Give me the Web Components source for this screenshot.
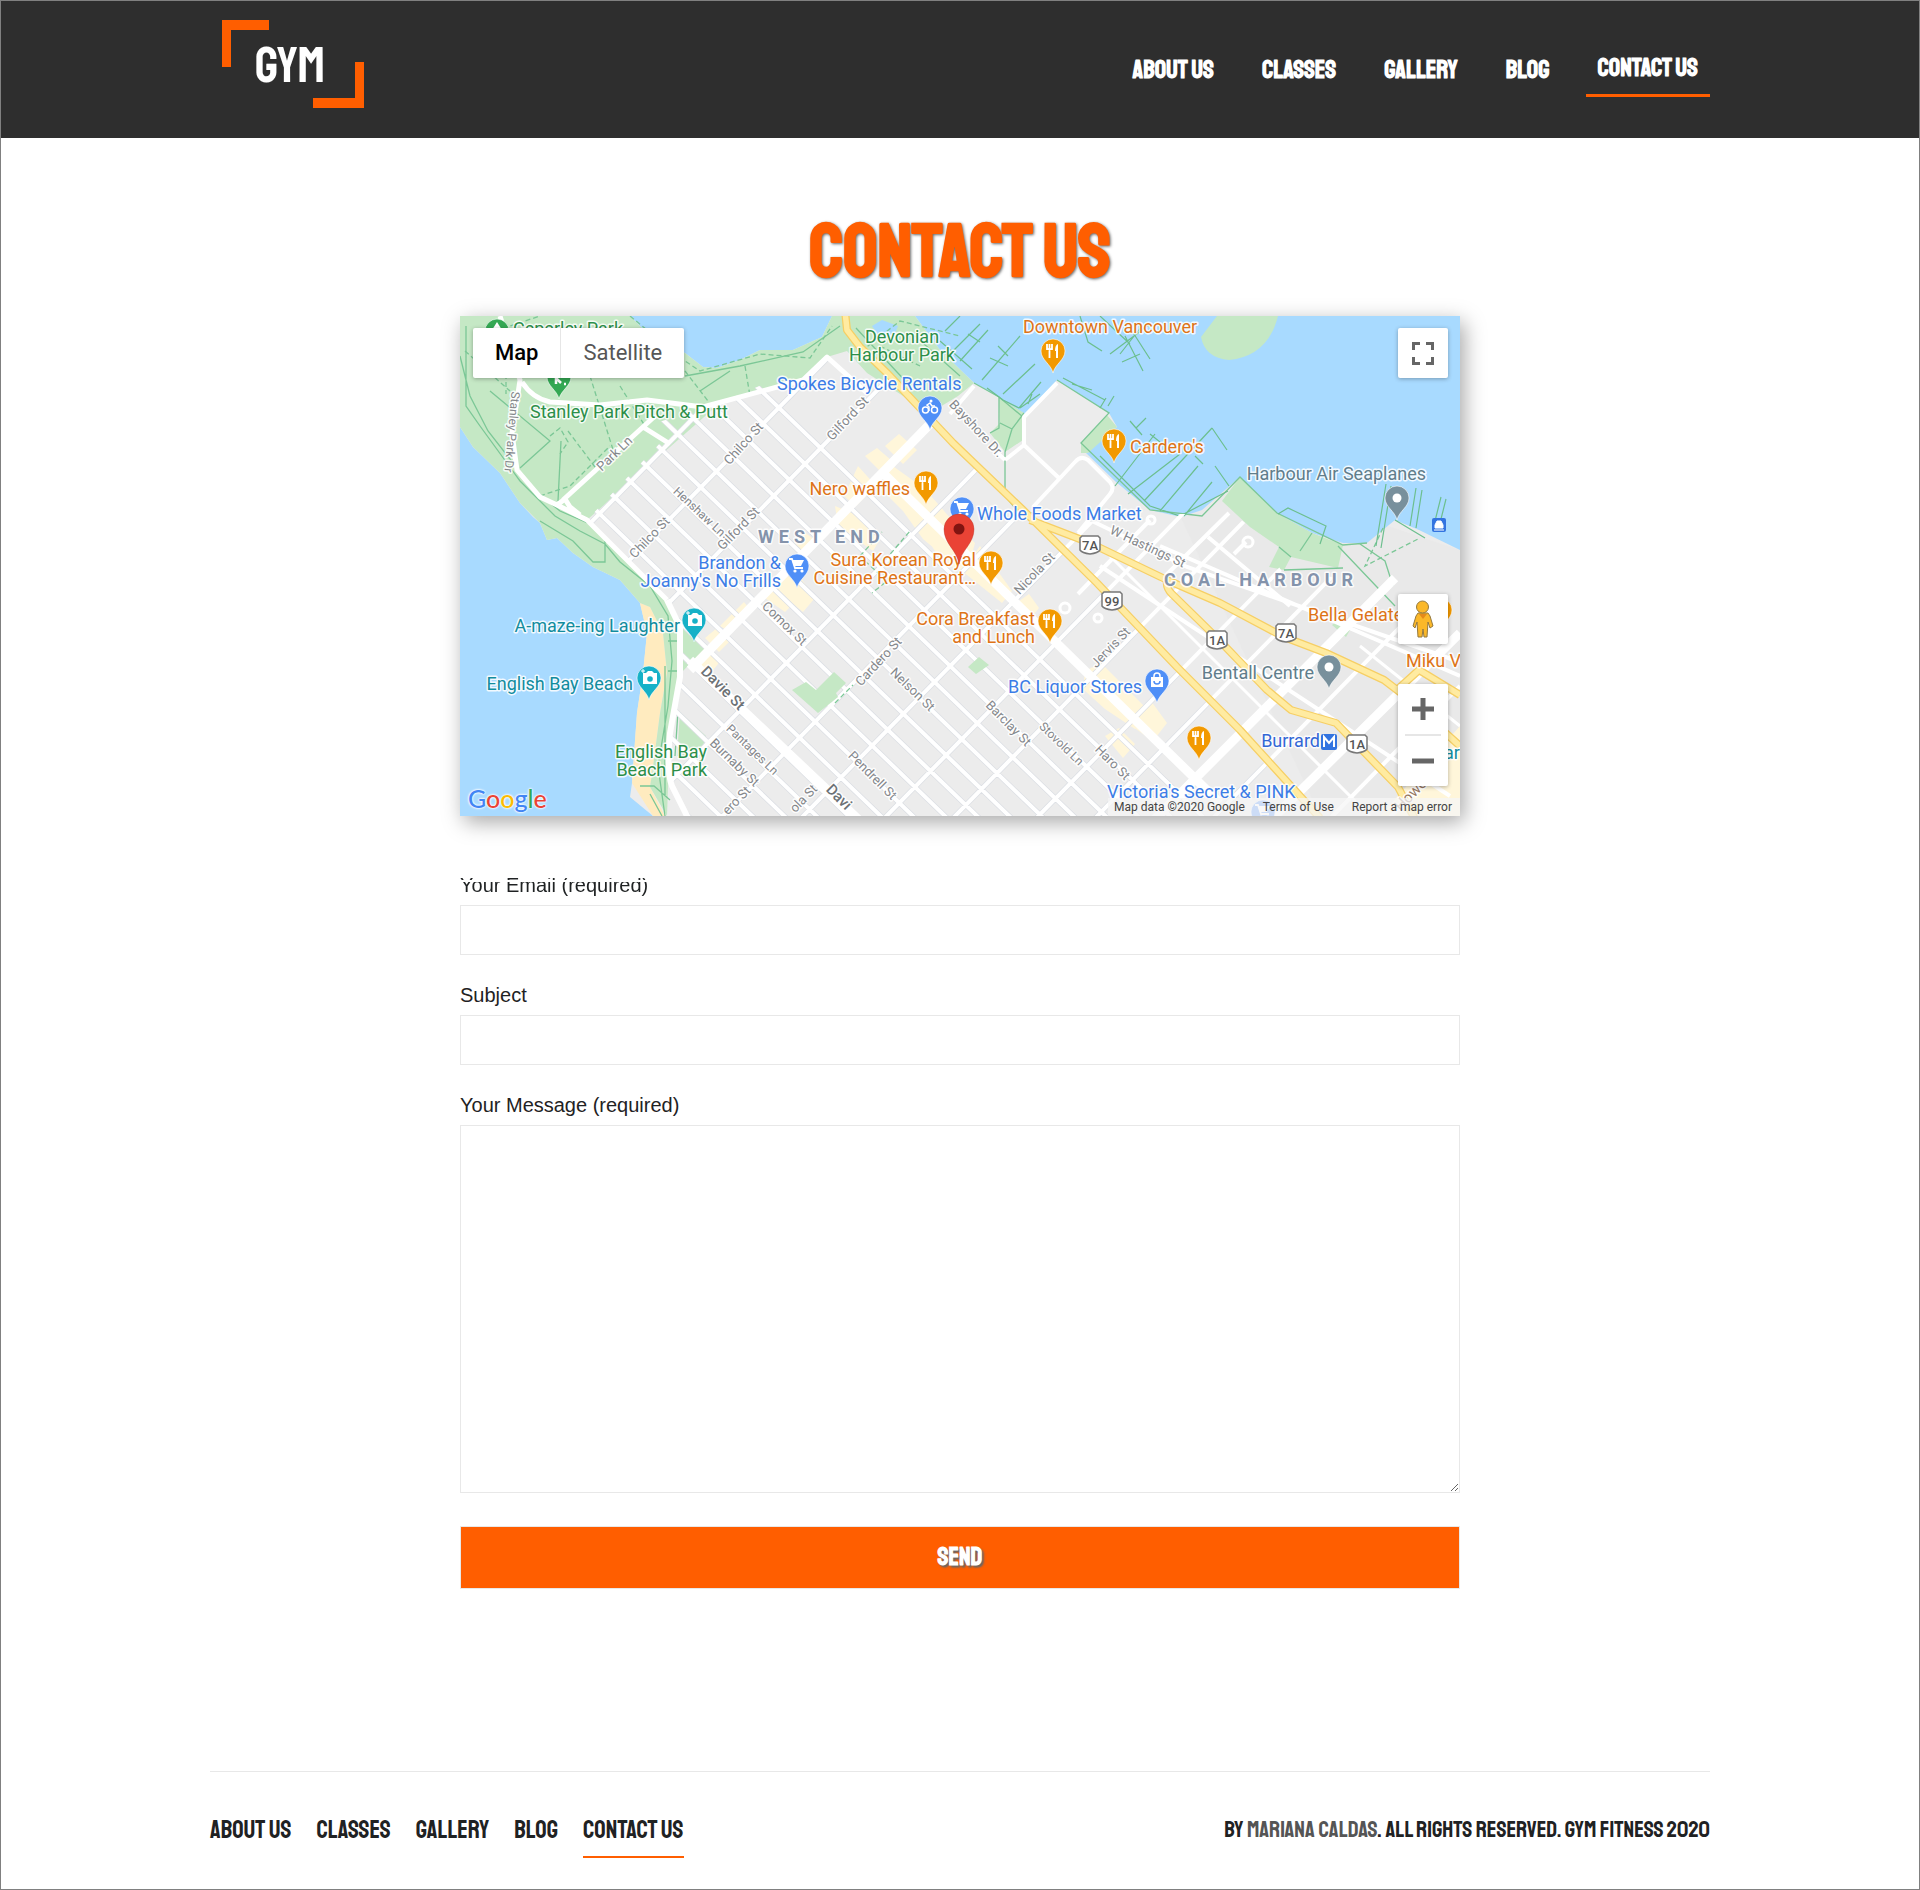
<!DOCTYPE html>
<html lang="en">
<head>
<meta charset="utf-8">
<title>Gym Fitness | Contact Us</title>
<style>
  *, *::before, *::after { box-sizing: border-box; }
  body {
    --brand: #ff5e00;
    --ink: #1f2223;
    --display: "Staatliches", "Bebas Neue", "Noto Sans ExtraCondensed", "Open Sans Condensed", "Roboto Condensed", "Liberation Sans Narrow", sans-serif;
    margin: 0;
    min-height: 100vh;
    border: 1px solid #808080;
    background: #fff;
    color: var(--ink);
    font: 20px/20px "Liberation Sans", Arial, sans-serif;
  }
</style>
</head>
<body>
<gym-page></gym-page>
<script>
const define = (name, markup, setup) => {
  const template = document.createElement('template');
  template.innerHTML = '<style>*,*::before,*::after{box-sizing:border-box}</style>' + markup;
  customElements.define(name, class extends HTMLElement {
    connectedCallback() {
      if (this.shadowRoot) return;
      this.attachShadow({ mode: 'open' }).append(template.content.cloneNode(true));
      if (setup) setup(this, this.shadowRoot);
    }
  });
};

define('gym-logo', `
<style>
  :host { display: block; }
  a { display: block; width: 142px; height: 88px; }
  svg { display: block; width: 100%; height: 100%; }
  text { font-family: var(--display); font-size: 51px; }
</style>
<a href="#" aria-label="Gym home">
  <svg viewBox="0 0 142 88">
    <path fill="#ff5e00" d="M0 0H47V10H9V47H0ZM142 42V88H91V78H133V42Z"/>
    <text x="68" y="62" text-anchor="middle" fill="#fff">GYM</text>
  </svg>
</a>`);

define('gym-nav', `
<style>
  :host { display: block; }
  nav { display: flex; align-items: flex-start; gap: 24px; }
  a { padding: 16px 12px; font: 700 25px/24px var(--display); color: inherit; text-decoration: none; text-transform: uppercase; white-space: nowrap; }
  a[aria-current] { padding: 14px 12px; border-bottom: 3px solid var(--brand); }
  :host([compact]) nav { gap: 25px; }
  :host([compact]) a { padding: 14px 0; font-weight: 400; }
  :host([compact]) a[aria-current] { border-bottom-width: 2px; }
</style>
<nav>
  <a href="#about">About us</a><a href="#classes">Classes</a><a href="#gallery">Gallery</a><a href="#blog">Blog</a><a href="#contact" aria-current="page">Contact us</a>
</nav>`);

define('gym-header', `
<style>
  :host { display: block; background: #2e2e2e; color: #fff; }
  header { display: flex; justify-content: space-between; align-items: flex-start; max-width: 1500px; height: 137px; margin: 0 auto; }
  gym-logo { padding: 19px 12px; }
  gym-nav { padding-top: 41px; }
</style>
<header><gym-logo></gym-logo><gym-nav></gym-nav></header>`);

define('gym-footer', `
<style>
  :host { display: block; }
  footer { display: flex; justify-content: space-between; align-items: flex-start; max-width: 1500px; margin: 0 auto; padding: 32px 0 28px; border-top: 1px solid #e8e8e8; }
  p { margin: 0; padding: 14px 0; font: 400 23px/24px var(--display); text-transform: uppercase; }
  a { color: #555; text-decoration: none; }
</style>
<footer>
  <gym-nav compact></gym-nav>
  <p>By <a href="#author">Mariana Caldas</a>. All rights reserved. Gym Fitness 2020</p>
</footer>`);

define('contact-field', `
<style>
  :host { display: block; }
  label { display: block; height: 30px; }
  input, textarea { display: block; width: 100%; height: 50px; margin: 0; padding: 12px; border: 1px solid #e8e8e8; border-radius: 0; background: #fff; font: inherit; outline: 0; }
  textarea { height: 368px; }
  :host([tucked]) label { --veil: linear-gradient(transparent 3px, #000 3px 5px, transparent 5px 7px, #000 7px); -webkit-mask-image: var(--veil); mask-image: var(--veil); }
</style>
<label for="control"></label>`, (host, root) => {
  const control = document.createElement(host.hasAttribute('multiline') ? 'textarea' : 'input');
  control.id = 'control';
  root.querySelector('label').textContent = host.getAttribute('label');
  root.append(control);
});

define('contact-form', `
<style>
  :host { display: block; }
  form { display: grid; gap: 30px; }
  button { height: 63px; margin-top: 3px; padding: 0 0 2px; border: 1px solid #e8e8e8; background: var(--brand); color: #fff; font: 700 25px/24px var(--display); text-shadow: 2px 2px 2px #666; }
</style>
<form onsubmit="return false">
  <contact-field tucked label="Your Email (required)"></contact-field>
  <contact-field label="Subject"></contact-field>
  <contact-field multiline label="Your Message (required)"></contact-field>
  <button>SEND</button>
</form>`);

/* ---- City map ---- */
const pinBody = 'M0 0C-2-9-12-13-12-22A12 12 0 0 1 12-22C12-13 2-9 0 0Z';
const glyphs = {
  food: '<path d="M-6-29v6M-3.500-29v6M-1-29v6M-6-25q2.500 3 5 0M-3.500-24v9" stroke="#fff" stroke-width="1.800" fill="none"/><path d="M5-15h-2v-7h-1q0-6 3-7z" fill="#fff"/>',
  cart: '<path d="M-8-29h3l3 9H6" fill="none" stroke="#fff" stroke-width="1.800"/><path d="M-5-28H7l-3 6h-7z" fill="#fff"/><circle cx="-2" cy="-17" r="1.600" fill="#fff"/><circle cx="5" cy="-17" r="1.600" fill="#fff"/>',
  bike: '<g fill="none" stroke="#fff" stroke-width="1.500"><circle cx="-4.500" cy="-20" r="3"/><circle cx="4.500" cy="-20" r="3"/><path d="M-1-19v-4l-2-2 3-2 2 3h3"/></g><circle cx="1" cy="-29" r="1.500" fill="#fff"/>',
  camera: '<path d="M-6-27h3l2-2h4l2 2h3v11H-6z" fill="#fff"/><circle cx="1" cy="-21" r="2.800" fill="#16b1c7"/><path d="M-6-31v4M-8-29h4" stroke="#fff"/>',
  bag: '<path d="M-6-26H6v10H-6z" fill="#fff"/><path d="M-3-25v-2a3 3 0 0 1 6 0v2" stroke="#fff" stroke-width="1.500" fill="none"/><path d="M-3-22a3 3 0 0 0 6 0" stroke="#4f8ff7" stroke-width="1.500" fill="none"/>',
  dot: '<circle cy="-22" r="4.500" fill="#fff"/>',
  tree: '<path d="M0-31l5 8H1v6h-2v-6h-4z" fill="#fff"/>',
  golf: '<circle cx="-2" cy="-25" r="2" fill="#fff"/><path d="M-3-22v7M-3-21l5 5M5-15h2" stroke="#fff" stroke-width="2.500" fill="none"/>'
};
const orange = '#f29900', blue = '#4f8ff7', teal = '#16b1c7', slate = '#78909c', green = '#34a853';
const pins = [
  [37, 37, green, 'tree'], [99, 83, green, 'golf'], [593, 57, orange, 'food'], [470, 114, blue, 'bike'],
  [466, 189, orange, 'food'], [654, 147, orange, 'food'], [502, 215, blue, 'cart'], [337, 272, blue, 'cart'],
  [531, 269, orange, 'food'], [590, 327, orange, 'food'], [697, 387, blue, 'bag'], [739, 444, orange, 'food'],
  [937, 204, slate, 'dot'], [869, 373, slate, 'dot'], [234, 326, teal, 'camera'], [189, 384, teal, 'camera'],
  [980, 316, orange, 'food'], [803, 518, blue, 'cart']
].map(([x, y, fill, kind]) => `<g transform="translate(${x} ${y})"><path d="${pinBody}" fill="${fill}" stroke="#fff" stroke-opacity=".6"/>${glyphs[kind]}</g>`).join('');

const places = [
  [53, 19, 's', 'park', 'Ceperley Park'], [442, 27, 'm', 'park', 'Devonian'], [442, 45, 'm', 'park', 'Harbour Park'],
  [70, 102, 's', 'park', 'Stanley Park Pitch &amp; Putt'], [563, 17, 's', 'eat', 'Downtown Vancouver'],
  [317, 74, 's', 'shop', 'Spokes Bicycle Rentals'], [450, 179, 'e', 'eat', 'Nero waffles'], [670, 137, 's', 'eat', "Cardero's"],
  [517, 204, 's', 'shop', 'Whole Foods Market'], [966, 164, 'e', 'site', 'Harbour Air Seaplanes'],
  [321, 253, 'e', 'shop', 'Brandon &amp;'], [321, 271, 'e', 'shop', "Joanny's No Frills"],
  [516, 250, 'e', 'eat', 'Sura Korean Royal'], [516, 268, 'e', 'eat', 'Cuisine Restaurant…'],
  [575, 309, 'e', 'eat', 'Cora Breakfast'], [575, 327, 'e', 'eat', 'and Lunch'],
  [220, 316, 'e', 'view', 'A-maze-ing Laughter'], [173, 374, 'e', 'view', 'English Bay Beach'],
  [247, 442, 'e', 'park', 'English Bay'], [247, 460, 'e', 'park', 'Beach Park'],
  [682, 377, 'e', 'shop', 'BC Liquor Stores'], [854, 363, 'e', 'site', 'Bentall Centre'], [860, 431, 'e', 'transit', 'Burrard'],
  [848, 305, 's', 'eat', 'Bella Gelate'], [946, 351, 's', 'eat', 'Miku V'], [984, 443, 's', 'view', 'ar'],
  [647, 482, 's', 'shop', "Victoria's Secret &amp; PINK"],
  [298, 227, 's', 'area', 'WEST END'], [704, 270, 's', 'area', 'COAL HARBOUR']
].map(([x, y, a, kind, t]) => `<text x="${x}" y="${y}" class="${kind}" text-anchor="${{ s: 'start', m: 'middle', e: 'end' }[a]}">${t}</text>`).join('');

const streets = [
  [283, 127, -48, 'Chilco St'], [189, 221, -46, 'Chilco St'], [387, 102, -47, 'Gilford St'], [278, 212, -46, 'Gilford St'],
  [154, 137, -44, 'Park Ln'], [240, 195, 43, 'Henshaw Ln', 'lane'], [53, 116, 95, 'Stanley Park Dr', 'lane'], [325, 307, 44, 'Comox St'],
  [293, 433, 44, 'Pantages Ln', 'lane'], [275, 446, 44, 'Burnaby St'], [413, 459, 45, 'Pendrell St'], [418, 345, -47, 'Cardero St'],
  [453, 373, 44, 'Nelson St'], [574, 257, -46, 'Nicola St'], [688, 230, 25, 'W Hastings St'], [517, 112, 47, 'Bayshore Dr.'],
  [650, 331, -46, 'Jervis St'], [549, 407, 45, 'Barclay St'], [602, 427, 44, 'Stovold Ln', 'lane'], [653, 446, 45, 'Haro St'],
  [343, 482, -46, 'ola St'], [276, 484, -46, 'ero St'], [379, 481, 45, 'Davi', 'major'], [263, 372, 45, 'Davie St', 'major'],
  [955, 474, -46, 'Howe S', 'howe']
].map(([x, y, r, t, c = '']) => `<text class="street ${c}" text-anchor="middle" transform="translate(${x} ${y}) rotate(${r})" y="5">${t}</text>`).join('');

const shields = [[630, 229, '7A'], [652, 285, '99'], [757, 324, '1A'], [826, 317, '7A'], [897, 428, '1A']]
  .map(([x, y, t]) => `<g transform="translate(${x} ${y})"><path d="M-8-9H8L10-7V5Q8 8 0 9Q-8 8-10 5V-7Z" fill="#fff" stroke="#777" stroke-width="1.500"/><text class="shield" text-anchor="middle" y="5">${t}</text></g>`).join('');

/* West End grid: avenues fall south-east, cross streets climb north-east. */
const line = (x1, y1, x2, y2) => `M${x1} ${y1}L${x2} ${y2}`;
let grid = '';
for (let k = -11; k <= 12; k++) { const c = 125 + 31 * k; grid += line(0, Math.round(c), 1000, Math.round(c + 965)); }
for (const d of [340, 417, 500, 680, 768, 850, 935, 1005, 1090, 1150, 1270, 1390, 1450, 1505]) grid += line(0, d, 1000, d - 1020);
let east = '';
for (const d of [850, 935, 1005, 1090, 1150, 1270, 1390, 1450]) east += line(0, d, 1000, d - 1020);
const wide = line(230, 354, 470, 108) + line(423, 157, 760, 487) + line(230, 344, 400, 505) + line(690, 508, 935, 262) + line(815, 500, 1000, 317);
const yellow = 'M385 -5L387 14L400 31L427 57L493 127L563 194L637 267L717 351L780 414L860 502M570 204L630 227L707 264L760 287L824 321L866 337L924 364L941 377L1000 430M938 373L959 354L1000 379M707 266Q706 272 712 278L757 322L807 374L831 394L876 407L938 471L956 505';

define('city-map', `
<style>
  :host { display: block; position: relative; height: 500px; overflow: hidden; font-family: Roboto, sans-serif; }
  .canvas { display: block; width: 100%; height: 100%; }
  text { font-size: 18px; paint-order: stroke; stroke: #fff; stroke-width: 3px; stroke-linejoin: round; stroke-opacity: .85; }
  .park { fill: #2c8f49; } .eat { fill: #de7417; } .shop { fill: #3c7de6; } .site { fill: #607d8b; } .view { fill: #128c9e; } .transit { fill: #3367d6; }
  .area { fill: #8493ab; font-weight: 700; letter-spacing: 5px; }
  .street { fill: #84878b; font-size: 13px; } .lane { font-size: 12px; } .major { fill: #6c7175; font-size: 15px; font-weight: 500; } .howe { fill: #94765f; font-size: 15px; }
  .shield { font-size: 13px; font-weight: 500; fill: #555; stroke: none; }
  .control { position: absolute; display: flex; background: #fff; border-radius: 2px; box-shadow: 0 1px 4px rgba(0,0,0,.3); }
  button { display: flex; align-items: center; justify-content: center; margin: 0; padding: 0; border: 0; background: none; font: 400 22px/50px Roboto, sans-serif; color: #565656; }
  .type { top: 12px; left: 13px; }
  .type button { height: 50px; padding: 0 22px; }
  .type button:first-child { color: #000; font-weight: 500; border-right: 1px solid #e6e6e6; }
  .full { top: 12px; right: 12px; }
  .person { top: 278px; right: 12px; }
  .zoom { top: 368px; right: 12px; flex-direction: column; }
  .control svg { display: block; }
  .square { width: 50px; height: 50px; }
  .zoom hr { width: 36px; margin: 0 auto; border: 0; border-top: 2px solid #e6e6e6; }
  .logo { position: absolute; left: 8px; bottom: 4px; font: 500 25px/28px Lato, sans-serif; text-decoration: none; text-shadow: 0 0 2px #fff, 0 0 2px #fff, 0 0 3px #fff; color: #4285f4; }
  .logo i { font-style: normal; } .r { color: #ea4335; } .y { color: #fbbc04; } .g { color: #34a853; }
  .legal { position: absolute; right: 0; bottom: 0; display: flex; gap: 18px; padding: 0 8px 0 6px; background: rgba(245,245,245,.75); font-size: 12px; line-height: 18px; color: #444; }
  .legal a { color: inherit; text-decoration: none; }
</style>
<svg class="canvas" viewBox="0 0 1000 500" preserveAspectRatio="xMidYMid slice" role="img" aria-label="Map of Vancouver West End">
  <defs>
    <clipPath id="downtown"><path d="M563 194L573 191L600 210L690 198L742 198L762 188L790 211L824 258L890 262L1000 330V500H855Z"/></clipPath>
    <clipPath id="westend"><path d="M367 41L260 87L183 111L205 122L127 204L167 244L207 284L220 311V361L210 417V467L227 500H855L563 194L427 57L400 60Z"/></clipPath>
  </defs>
  <rect width="1000" height="500" fill="#ececec"/>
  <path fill="#e8e8e8" d="M780 161L1000 234V500H860L720 200Z" opacity=".6"/>
  <path fill="#fff6da" d="M425 130l14-12l18 16l-14 14zM405 140l12-8l14 12l-10 12zM398 150l18 20l-20 20l-12-10zM375 190l24 10l20 25l-6 10l-35-25zM430 148l35 25l26 30l22 35l-20 10l-30-25l-20-28l-22-22zM455 205l20-16l40 38l-8 30l-24-10zM520 230l32 45l-10 12l-40-32zM305 282l22-22l14 2l14 20l-12 14l-10-8l-8 8zM260 310l24-24l8 10l-22 20zM245 322l12-10l14 12l-12 12zM230 345l16-14l16 12l-16 20zM330 230l14-14l14 10l-16 14zM625 355l16-8l44 44l-10 22l-30-20l-22-20zM675 395l16-10l16 22l-14 18l-20-14zM645 420l14-8l16 16l-12 14zM555 288l14-10l10 14l-8 10zM920 500l80-90v90z"/>
  <path fill="#a8daff" d="M0 111L13 131L40 157L60 187L73 201L80 207L87 224L97 222L113 237L133 251L160 264L180 287L187 317L183 357L177 397L172 467L170 481L193 500H0ZM170 0L197 27L225 37L243 51L257 52L280 44L300 34L333 34L362 21L372 0ZM455 0L480 34L514 67L539 81L563 101L597 64L649 97L657 111L626 137L656 166L690 194L721 201L742 194L780 161L817 197L852 217L883 227L907 227L935 204L959 214L1000 234V0Z"/>
  <path fill="#ffebbf" d="M180 287L190 291L203 317L207 357L200 397L193 451L190 471L205 500H193L172 467L177 397L183 357L187 317ZM0 25L4 60L0 80Z"/>
  <path fill="#c5e8c5" d="M0 0H170L197 27L225 37L243 51L257 52L280 44L300 34L333 34L362 21L372 0H455L480 34L514 67L498 80L470 97L407 57L387 35L367 41L343 64L260 87L127 204L167 244L207 284L220 311V361L210 417L207 500L190 471L193 451L200 397L207 357L203 317L190 291L180 287L160 264L133 251L113 237L97 222L87 224L80 207L60 187L40 157L13 131L0 111ZM220 396L246 420L240 440L217 440ZM222 310L245 332L222 356ZM757 0L741 21Q745 42 769 44Q808 40 818 0ZM762 185L780 161L817 197L852 217L883 229L878 252L831 241L824 254L809 251L819 231L790 211ZM621 137V127L647 99L657 111L628 137ZM539 81L564 97L563 124L545 136L530 117L540 107ZM872 309l12-10l10 8l-8 14z"/>
  <path fill="#a8daff" d="M412 10l10-6l16 6l-4 10l-14 2z"/>
  <g fill="none" stroke="#7bc796" stroke-width="1.300">
    <path d="M6 10V90L20 110L60 165L95 200L120 215L145 228L160 246L190 270L208 300L212 345L208 390L198 450L205 500M0 40L10 80L28 115L75 175L100 195L130 208M30 75L90 125L60 152M101 125L98 185M145 225V246H133L113 225L80 205M225 60L280 50L343 36L380 10M240 75L270 55M208 325H220M208 355H220M218 395L215 440M205 350V480M180 470h14l16 14M190 478l12 22M514 67L539 81L563 101M597 64L649 97L621 127L690 194L742 200L780 161L817 197L883 229L907 227M819 231L831 241M852 217L840 235M539 81V112L530 117M540 107L552 113L564 97M552 113L545 136V180L560 198L573 197M396 12L450 70M455 20L500 60M878 230L935 290M883 252L824 254M900 228L925 245L933 270"/>
    <path stroke-dasharray="5 3" d="M5 35L50 75M46 50v28M170 0L225 45L240 55L300 38L350 42L372 10M225 55L248 85M285 50L290 80M90 120l10-8l8 14l-8 12M108 115L138 155M160 70L185 110M130 60L155 140M80 180L110 170L150 130M20 20L80 0M395 40L440 5L500 20M420 30l40 20M923 212L905 250L960 222"/>
  </g>
  <path fill="none" stroke="#6cbf8e" stroke-width="1.200" d="M480 25L512 53M485 15L500 0M493 35L520 8M500 45L528 14M508 18l12 8M522 64L560 20M530 42l18 8M538 30l10 10M543 78L575 48M527 72l16 12l16 8l22-26M560 92L580 78M568 88l4-10M620 0L628 26L642 35M650 38L690 8M640 0l30 28M660 38l22-28M665 20l18 35M672 15l18 28M680 38l-18 8M603 62L645 84M612 68l20 6M640 92l6-10M648 90l6-10M655 170L695 118M668 178L720 138M684 185L752 112M700 195L738 150M724 200L752 166M690 118l10 8M735 140l8 8M752 112l15 22M640 140L690 190L720 200L768 175M670 105l12 14M676 112l10-10M755 150l14 20M818 198L828 192L866 210L860 228M916 230l10-62M921 232l10-62M950 210l6-38M956 212l6-38M975 205l6-24M980 207l6-24M935 204L965 222"/>
  <g clip-path="url(#westend)" fill="none"><path d="${grid}" stroke="#dcdfe4" stroke-width="5.500"/><path d="${grid}" stroke="#fff" stroke-width="4"/></g>
  <path fill="#c5e8c5" d="M332 374l14-8l10 8l18-18l12 11l-10 10l2 4l-20 16zM508 351l11-10l10 8l-13 9z"/>
  <path fill="none" stroke="#7bc796" stroke-width="1.300" stroke-dasharray="5 3" d="M400 240l22-24M405 245l22 20l-15 12M420 250l30-35M375 387l18-18"/>
  <g clip-path="url(#downtown)" fill="none"><path d="${east}M583 181L630 204L727 251L997 345M640 250L990 480M700 230L1000 360" stroke="#fff" stroke-width="4"/><path d="M600 260L860 500M650 240L910 500M900 330L1000 410" stroke="#fff" stroke-width="3"/></g>
  <g fill="none" stroke="#fff" stroke-linejoin="round">
    <path stroke-width="5" d="M40 0L60 64L52 117L57 154L80 181L97 189L127 204L167 244L207 284M62 66Q72 82 90 86L140 89L187 84L243 91L343 64L367 41L407 77M103 184L183 111L195 100M183 111L210 128M97 189l8-6l5 8l10 8"/>
    <path stroke-width="4" d="M490 98L514 70M545 144L564 129V101L597 67M564 129L600 163M545 144L530 130M573 191L615 146Q621 139 628 144L650 166Q655 172 650 178L618 217M690 204L618 278M769 197L700 265M748 221L830 290M786 226L774 238"/>
    <circle cx="691" cy="204" r="4" stroke-width="3"/><circle cx="788" cy="226" r="5" stroke-width="3"/><circle cx="605" cy="292" r="5" stroke-width="3"/><circle cx="638" cy="302" r="4" stroke-width="3"/>
    <path stroke-width="6" d="M207 284L220 311V361L210 417Q206 455 212 470L227 500"/>
    <path stroke-width="9" d="${wide}"/>
  </g>
  <g fill="none" stroke-linejoin="round"><path d="${yellow}" stroke="#f6cf65" stroke-width="8"/><path d="${yellow}" stroke="#ffeba1" stroke-width="5.500"/></g>
  ${streets}${shields}${places}${pins}
  <g transform="translate(861 418)"><rect width="16" height="16" rx="2" fill="#3374e0"/><path d="M3 13V3L8 9L13 3V13" fill="none" stroke="#fff" stroke-width="2"/></g>
  <g transform="translate(972 202)"><rect width="14" height="14" rx="2" fill="#3374e0"/><path d="M3 10V7L5 3H9L11 7V10ZM2 12H12" fill="#fff" stroke="#fff"/></g>
  <path d="M499 248C497 234 484 228 484 213A15 15 0 0 1 514 213C514 228 501 234 499 248Z" fill="#ea4335" stroke="#b8352b" stroke-opacity=".4"/><circle cx="499" cy="213" r="5.500" fill="#811411"/>
</svg>
<div class="control type"><button>Map</button><button>Satellite</button></div>
<div class="control full"><button class="square" aria-label="Toggle fullscreen"><svg width="22" height="23"><path d="M1.500 8V1.500H8M14 1.500h6.500V8M20.500 15v6.500H14M8 21.500H1.500V15" fill="none" stroke="#666" stroke-width="3"/></svg></button></div>
<div class="control person"><button class="square" aria-label="Street View"><svg width="22" height="38"><path d="M6 13H16L18 16L21 26L18 28L16 22L15 37H12L11 29L10 37H6L5 22L3 28L1 26L4 16Z" fill="#fbb829" stroke="#94793f"/><circle cx="10.500" cy="7" r="6" fill="#fbb829" stroke="#94793f"/><path d="M7 14h8l-4 5z" fill="#e58a1a"/></svg></button></div>
<div class="control zoom"><button class="square" aria-label="Zoom in"><svg width="22" height="24"><path d="M11 1V23M0 12H22" stroke="#666" stroke-width="5"/></svg></button><hr><button class="square" aria-label="Zoom out"><svg width="22" height="24"><path d="M0 12H22" stroke="#666" stroke-width="5"/></svg></button></div>
<a class="logo" href="#google" aria-label="Google">G<i class="r">o</i><i class="y">o</i>g<i class="g">l</i><i class="r">e</i></a>
<div class="legal"><span>Map data ©2020 Google</span><a href="#terms">Terms of Use</a><a href="#report">Report a map error</a></div>`);

define('gym-page', `
<style>
  :host { display: block; }
  main { max-width: 1000px; margin: 0 auto; padding: 76px 0 182px; }
  h1 { margin: 0 0 26px; text-align: center; font: 700 75px/76px var(--display); color: var(--brand); text-shadow: 1px 1px 3px #666; }
  city-map { box-shadow: 4px 6px 20px rgba(0,0,0,.35); }
  contact-form { margin-top: 59px; }
</style>
<gym-header></gym-header>
<main>
  <h1>CONTACT US</h1>
  <city-map></city-map>
  <contact-form></contact-form>
</main>
<gym-footer></gym-footer>`);
</script>
</body>
</html>
